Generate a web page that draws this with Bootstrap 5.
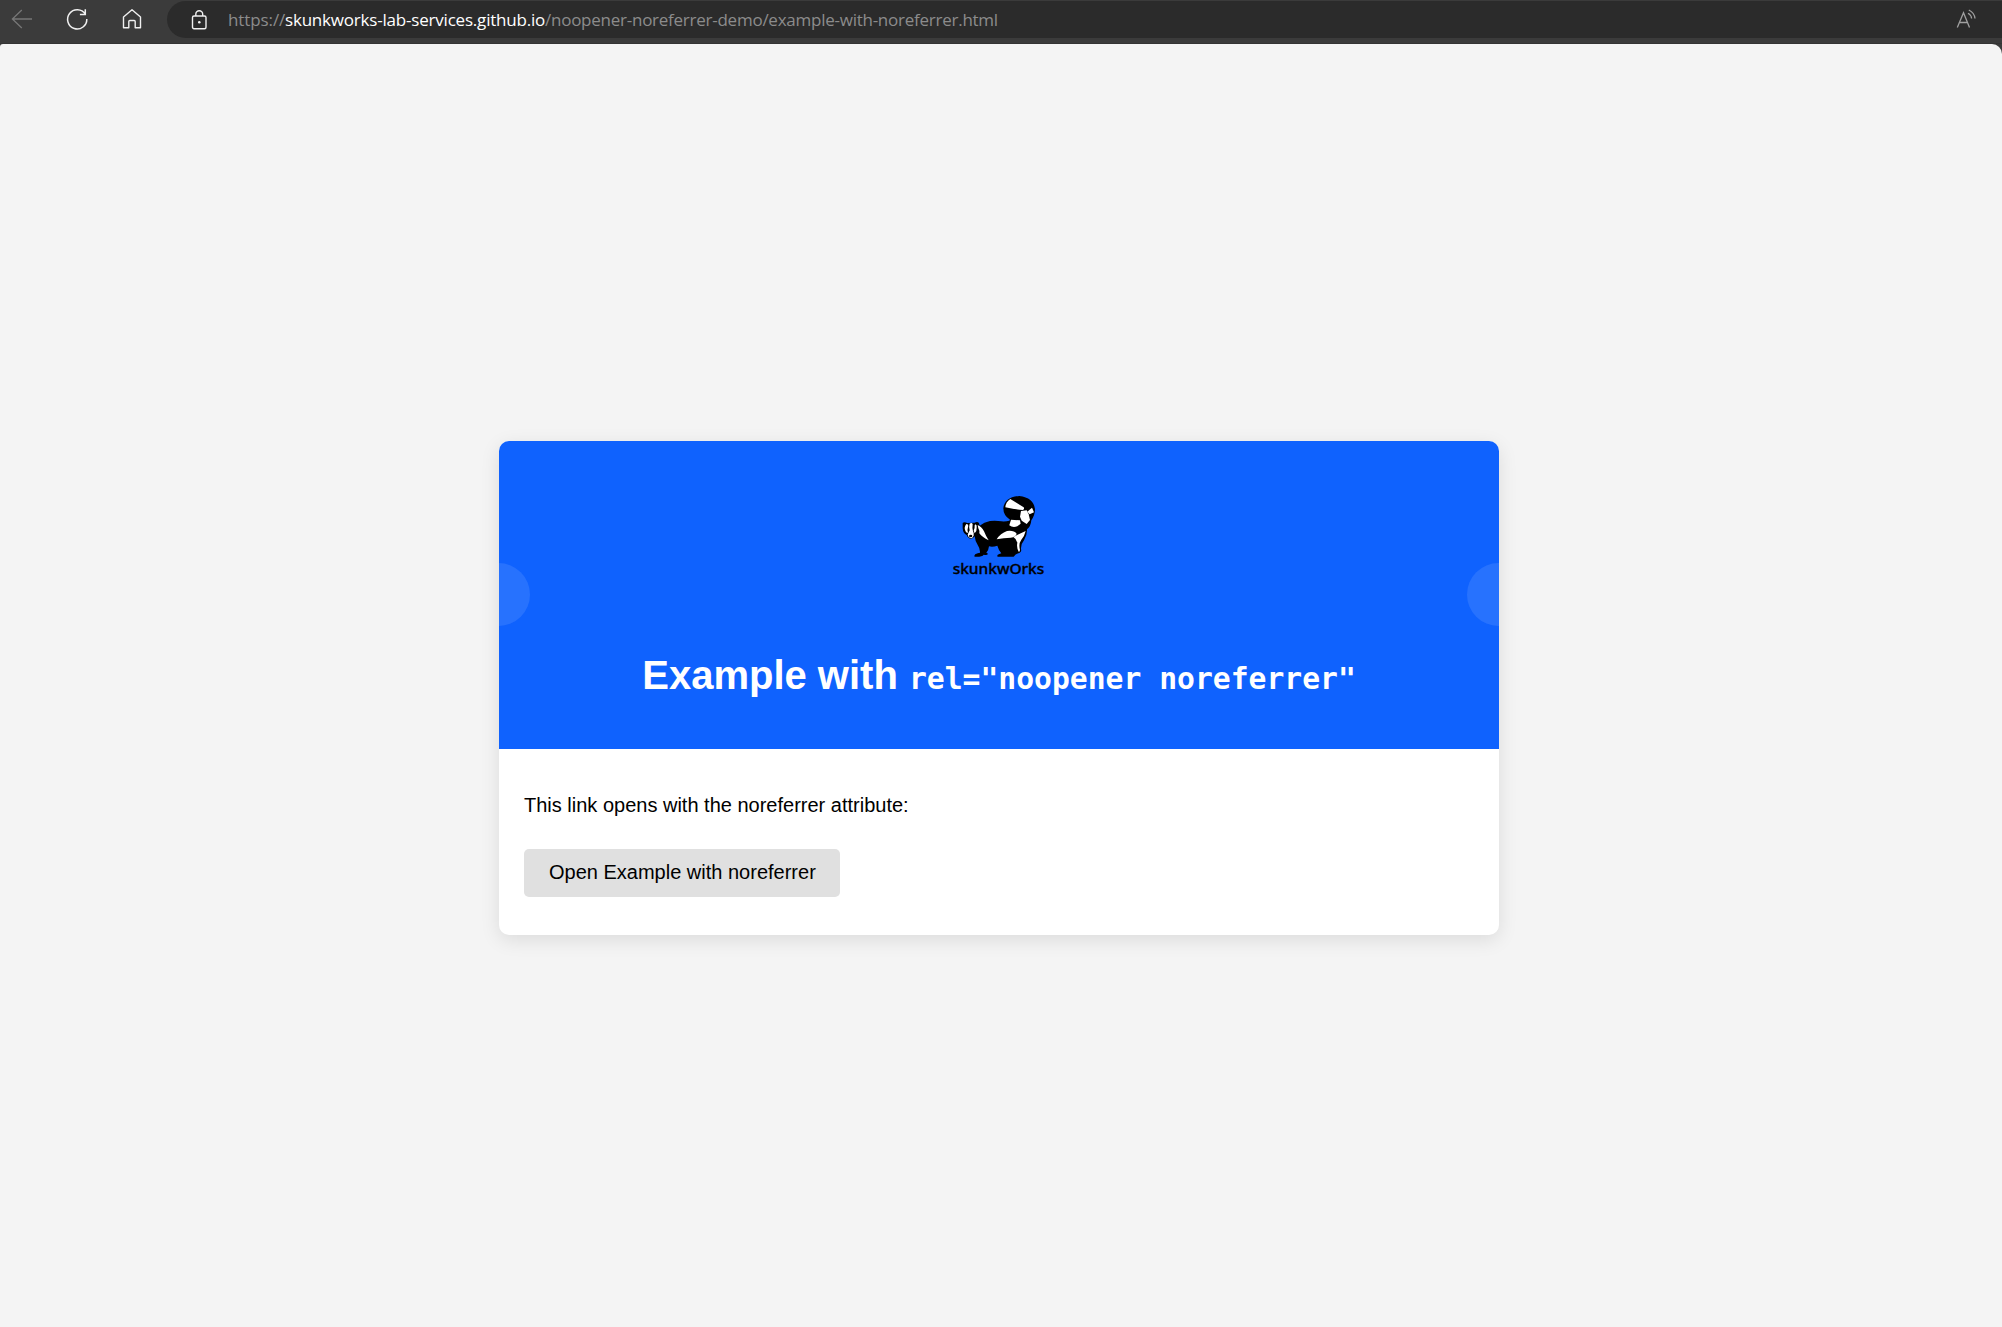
<!DOCTYPE html>
<html lang="en">
<head>
<meta charset="utf-8">
<title>Example with noreferrer</title>
<link href="https://cdn.jsdelivr.net/npm/bootstrap@5.3.0/dist/css/bootstrap.min.css" rel="stylesheet">
<style>
body{background:#3b3b3b;font-family:"Liberation Sans",Arial,sans-serif;font-size:20px;line-height:23px;color:#000}
.toolbar{height:44px;background:#3b3b3b;border-bottom:1px solid #343434}
.tools{width:167px;height:38px;flex:none;padding-left:11px}
.tools svg,.address svg{display:block;flex:none}
.tools .reload{margin-left:32px}
.tools .home{margin-left:33px}
.address{height:37px;margin-top:1px;background:#2b2b2b;border-radius:19px 0 0 19px;padding-left:24px}
.url{font:17px/24px "Open Sans","Noto Sans",sans-serif;color:#8c8c8c;margin-left:21px;white-space:pre}
.url .scheme{display:inline-block;width:57px;letter-spacing:-.1px}
.url .host{display:inline-block;width:260px;color:#fff;letter-spacing:-.2px}
.url .rest{letter-spacing:-.25px}
.viewport{background:#f4f4f4;height:1283px;border-radius:3px 10px 0 0;padding:397px 0 0 499px}
.demo-card{width:1000px;height:494px;border:0;border-radius:10px;overflow:hidden;box-shadow:0 5px 19px rgba(0,0,0,.1)}
.hero{height:308px;background:#0f62fe;color:#fff;padding-top:44px;overflow:hidden}
.hero::before,.hero::after{content:"";position:absolute;top:122px;width:63px;height:63px;border-radius:50%;background:rgba(255,255,255,.1)}
.hero::before{left:-32px}
.hero::after{right:-31px}
.hero h1{font-size:40px;font-weight:700;line-height:46px;margin:67px 0 0;white-space:nowrap}
.hero h1 code{font-family:"DejaVu Sans Mono",monospace;font-size:29.7px;line-height:1;color:inherit}
.content-area{padding:45px 25px 37px}
.open-link{background:#e0e0e0;color:#000;font-size:20px;line-height:23px;border:0;border-radius:5px;padding:12px 25px 13px;width:316px;height:48px}
</style>
<script src="https://cdn.jsdelivr.net/npm/bootstrap@5.3.0/dist/js/bootstrap.bundle.min.js"></script>
</head>
<body class="overflow-hidden">
<header class="toolbar d-flex align-items-start">
  <nav class="tools d-flex align-items-center">
    <svg width="22" height="22" viewBox="0 0 22 22" fill="none" stroke="#777" stroke-width="1.3"><path d="M10.8 2 1.4 11l9.4 9M1.5 11H21"/></svg>
    <svg class="reload" width="24" height="24" viewBox="0 0 24 24" fill="none" stroke="#f0f0f0" stroke-width="1.5"><path d="M20.3 7.2A9.6 9.6 0 1 0 21.8 12M20.3 2.2v5.4h-5.4"/></svg>
    <svg class="home" width="20" height="22" viewBox="0 0 20 22" fill="none" stroke="#f0f0f0" stroke-width="1.4" stroke-linejoin="round"><path d="M1.5 9 10 1.8 18.5 9v10.7h-5.3v-6.2q0-1-1-1H7.8q-1 0-1 1v6.2H1.5z"/></svg>
  </nav>
  <div class="address flex-grow-1 d-flex align-items-center">
    <svg width="16" height="22" viewBox="0 0 16 22" fill="none" stroke="#f0f0f0" stroke-width="1.4"><rect x="1.5" y="7" width="13.5" height="12.8" rx="1.5"/><path d="M4.8 7V5.2a3.4 3.4 0 0 1 6.9 0V7"/><circle cx="8.3" cy="13.2" r="1.3" fill="#f0f0f0" stroke="none"/></svg>
    <div class="url"><span class="scheme">https://</span><span class="host">skunkworks-lab-services.github.io</span><span class="rest">/noopener-noreferrer-demo/example-with-noreferrer.html</span></div>
    <svg class="ms-auto me-4" width="22" height="22" viewBox="0 0 22 22" fill="none" stroke="#a0a0a0" stroke-width="1.3"><path d="M1.3 18.5 7.5 3.8l6 14.7M3.4 13.5h8M12 4.2q3.4 1.8 3.6 5.3M12.8 1q5.7 2.8 6.2 8.5"/></svg>
  </div>
</header>
<main class="viewport">
  <section class="card demo-card">
    <div class="hero position-relative text-center">
      <svg class="d-block mx-auto" width="116" height="100" viewBox="3 0 348 300">
        <path fill="#000" d="M68 114Q72 109 82 114L104 113Q112 108 117 114L119 122Q132 112 150 108Q168 106 184 109Q198 110 208 107L210 104Q190 92 190 70Q194 36 238 33Q280 38 285 72Q285 90 274 106Q272 126 261 133Q262 150 252 166Q242 178 243 192Q246 200 238 204Q228 206 221 215H173Q169 210 178 207L184 205Q176 196 172 182Q158 187 147 184Q146 196 139 203L144 206Q142 212 131 209Q127 216 104 215Q100 208 113 205L120 203Q121 192 112 178Q106 170 104 154Q98 163 90 161Q82 158 80 150Q69 145 68 130Z"/>
        <g fill="#fff">
          <path d="M79 117Q87 118 84 127Q81 135 84 143Q78 145 76 137Q71 128 79 117Z"/>
          <path d="M89 116Q95 111 98 117Q96 129 99 139Q103 145 101 152Q97 160 92 160Q84 157 83 149Q86 141 89 136Q86 124 89 116Z"/>
          <path d="M106 118Q112 120 110 128Q111 139 104 145L101 137Q105 128 104 121Z"/>
          <path d="M113 120Q124 124 132 139Q138 154 146 166Q127 157 118 145Q119 136 115 130Z"/>
          <path d="M211 42L251 67Q254 72 249 75Q221 73 196 67Q197 51 211 42Z"/>
          <path d="M243 78L260 76L266 88L270 105L260 117L245 107L240 95Z"/>
          <path d="M262 80L276 68L282 82L269 88Z"/>
          <path d="M213 104L240 106L242 116L232 124Q218 129 208 121Z"/>
          <path d="M170 163Q181 145 201 138Q221 135 230 146Q228 155 212 158Q191 158 170 163Z"/>
          <path d="M220 156Q243 144 257 138Q253 155 244 164Q235 176 240 195L237 202Q229 190 232 173Q230 162 220 156Z"/>
        </g>
        <ellipse cx="92" cy="153" rx="5" ry="4" fill="#000"/>
        <text x="38" y="267" textLength="275" lengthAdjust="spacingAndGlyphs" font-family="Noto Sans,Open Sans,sans-serif" font-size="44" font-weight="500" fill="#000" stroke="#000" stroke-width="1">skunkwOrks</text>
      </svg>
      <h1>Example with <code>rel="noopener noreferrer"</code></h1>
    </div>
    <div class="content-area">
      <p class="mb-0 pb-2">This link opens with the noreferrer attribute:</p>
      <a class="btn open-link text-nowrap mt-4" href="#">Open Example with noreferrer</a>
    </div>
  </section>
</main>
</body>
</html>
